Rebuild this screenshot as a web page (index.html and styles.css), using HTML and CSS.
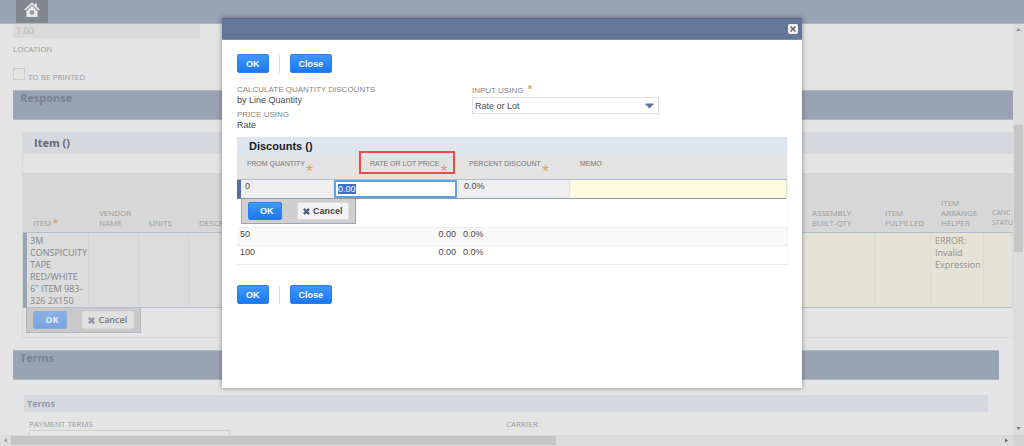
FILE: index.html
```html
<!DOCTYPE html>
<html lang="en">
<head>
<meta charset="utf-8">
<title>Quantity Discounts</title>
<link rel="stylesheet" href="styles.css">
</head>
<body>
<div class="app">
  <header class="topbar">
    <a class="home" href="#" aria-label="Home">
      <svg viewBox="0 0 16 16" width="16" height="16" aria-hidden="true">
        <path d="M0.800 8.200 8 1.400l7.200 6.800" fill="none" stroke="#e6e6e6" stroke-width="1.700"/>
        <path d="M11 1.600h2v4l-2-2z" fill="#e6e6e6"/>
        <path fill-rule="evenodd" d="M8 3.800 13.600 9.200V15H2.400V9.200zM6.200 8.600v3.600h3.600V8.600z" fill="#e6e6e6"/>
        <path d="M7.300 9.700h1.400v1.400H7.300z" fill="#c4c6ca"/>
      </svg>
    </a>
  </header>

  <main class="page">
    <input class="rate-field" type="text" value="1.00" aria-label="Exchange rate" disabled>
    <p class="label location">LOCATION</p>
    <label class="check label"><input type="checkbox"><span>TO BE PRINTED</span></label>

    <h2 class="section">Response</h2>
    <section class="panel">
      <h3 class="panel-title">Item ()</h3>
      <table class="items">
        <colgroup>
          <col class="c-item"><col class="c-vendor"><col class="c-units"><col><col class="c-built"><col class="c-full"><col class="c-help"><col class="c-canc">
        </colgroup>
        <thead>
          <tr>
            <th>ITEM<span class="star">*</span></th>
            <th>VENDOR NAME</th>
            <th>UNITS</th>
            <th>DESCRIPTION</th>
            <th>ASSEMBLY BUILT-QTY</th>
            <th>ITEM FULFILLED</th>
            <th>ITEM ARRANGE HELPER</th>
            <th>CANC<br>STATU</th>
          </tr>
        </thead>
        <tbody>
          <tr>
            <td class="current">3M CONSPICUITY TAPE RED/WHITE 6" ITEM 983-<wbr>326 2X150</td>
            <td></td><td></td><td></td>
            <td class="edit"></td><td class="edit"></td>
            <td class="edit">ERROR: Invalid Expression</td>
            <td class="edit"></td>
          </tr>
        </tbody>
      </table>
      <div class="row-actions">
        <button class="btn primary" type="button">OK</button>
        <button class="btn plain" type="button">
          <svg viewBox="0 0 8 8" width="7" height="7" aria-hidden="true"><path d="M1 1l6 6M7 1L1 7" stroke="currentColor" stroke-width="2.800"/></svg>Cancel</button>
      </div>
    </section>

    <h2 class="section terms">Terms</h2>
    <h4 class="subbar">Terms</h4>
    <div class="term-fields">
      <label class="label">PAYMENT TERMS<input class="term-input" type="text"></label>
      <span class="label">CARRIER</span>
    </div>
  </main>

  <div class="vscroll" aria-hidden="true">
    <svg viewBox="0 0 6 4" width="5" height="3"><path d="M0 4 3 0l3 4z" fill="#8b8b8b"/></svg>
    <div class="vthumb"></div>
    <svg viewBox="0 0 6 4" width="5" height="3"><path d="M0 0h6L3 4z" fill="#7d7d7d"/></svg>
  </div>
  <div class="hscroll" aria-hidden="true">
    <svg viewBox="0 0 4 6" width="3" height="5"><path d="M4 0v6L0 3z" fill="#a0a0a0"/></svg>
    <div class="hthumb"></div>
    <svg viewBox="0 0 4 6" width="3" height="5"><path d="M0 0v6l4-3z" fill="#6d6d6d"/></svg>
  </div>
  <div class="corner"></div>
</div>

<div class="dialog" role="dialog" aria-label="Quantity discounts">
  <div class="dialog-head">
    <button class="close" type="button" aria-label="Close window">
      <svg viewBox="0 0 8 8" width="8" height="8" aria-hidden="true"><path d="M1.500 1.500l5 5M6.500 1.500l-5 5" stroke="#6a6a6a" stroke-width="1.600"/></svg>
    </button>
  </div>
  <form class="dialog-body">
    <div class="buttons">
      <button class="btn primary" type="button">OK</button>
      <span class="divider"></span>
      <button class="btn primary" type="button">Close</button>
    </div>
    <div class="fields">
      <dl class="facts">
        <dt>CALCULATE QUANTITY DISCOUNTS</dt><dd>by Line Quantity</dd>
        <dt>PRICE USING</dt><dd>Rate</dd>
      </dl>
      <div class="using">
        <label for="using">INPUT USING <span class="star">*</span></label>
        <div class="select">
          <select id="using"><option>Rate or Lot</option></select>
          <svg viewBox="0 0 9 6" width="9" height="6" aria-hidden="true"><path d="M0.500 0.500h8v1L4.500 5.500.5 1.500z" fill="#5d78a3"/></svg>
        </div>
      </div>
    </div>
    <section class="discounts">
      <h3>Discounts ()</h3>
      <table class="grid">
        <colgroup><col class="g-from"><col class="g-rate"><col class="g-pct"><col></colgroup>
        <thead>
          <tr>
            <th><span class="req">FROM QUANTITY</span></th>
            <th class="marked"><span class="req">RATE OR LOT PRICE</span></th>
            <th><span class="req">PERCENT DISCOUNT</span></th>
            <th>MEMO</th>
          </tr>
        </thead>
        <tbody>
          <tr class="editing">
            <td class="current">0</td>
            <td class="cell-input"><input id="price" type="text" value="0.00" aria-label="Rate or lot price"></td>
            <td>0.0%</td>
            <td class="memo"></td>
          </tr>
          <tr class="tools">
            <td colspan="4">
              <div class="row-actions">
                <button class="btn primary" type="button">OK</button>
                <button class="btn plain" type="button">
                  <svg viewBox="0 0 8 8" width="7" height="7" aria-hidden="true"><path d="M1 1l6 6M7 1L1 7" stroke="currentColor" stroke-width="2.800"/></svg>Cancel</button>
              </div>
            </td>
          </tr>
          <tr class="line odd"><td>50</td><td class="num">0.00</td><td>0.0%</td><td></td></tr>
          <tr class="line"><td>100</td><td class="num">0.00</td><td>0.0%</td><td></td></tr>
        </tbody>
      </table>
    </section>
    <div class="buttons">
      <button class="btn primary" type="button">OK</button>
      <span class="divider"></span>
      <button class="btn primary" type="button">Close</button>
    </div>
  </form>
</div>
<script src="main.js"></script>
</body>
</html>
```

FILE: styles.css
```css
* { box-sizing: border-box; }
body { margin: 0; background: #e4e4e4; color: #858585; font: 9px/12px "Open Sans", sans-serif; }
h2, h3, h4, p, dl, dd { margin: 0; }
button, input, select { font: inherit; color: inherit; }
table { border-collapse: separate; border-spacing: 0; table-layout: fixed; width: 100%; }

.app { display: grid; grid-template: 24px minmax(0, 1fr) 11px / minmax(0, 1fr) 11px; height: 100vh; min-height: 446px; }
.topbar { grid-column: 1 / -1; display: flex; padding-left: 16px; background: #98a3b3; border-bottom: 1px solid #b0b8c4; }
.home { display: flex; align-items: center; justify-content: center; width: 32px; padding-bottom: 3px; background: #82868f; }

.page { overflow: hidden; padding-left: 13px; }
.label { color: #9c9c9c; font-size: 8px; line-height: 12px; }
.rate-field { display: block; width: 187px; height: 14px; padding: 0 3px 2px; border: 0; background: #dadada; color: #b4b4b4; }
.location { margin-top: 5px; }
.check { display: flex; align-items: flex-end; gap: 3px; height: 26px; }
.check span { line-height: 8px; }
.check input { appearance: none; width: 12px; height: 12px; margin: 0 0 1px; border: 1px solid #cdcdcd; }
.section { height: 30px; margin-top: 9px; padding: 0 7px; background: #98a3b3; border: 1px solid #b0b8c4; border-left: 0; border-right: 0; color: #788395; font-size: 11px; line-height: 13px; }
.panel { margin: 12px 0 0 9px; padding-bottom: 4px; border: 1px solid #d9d9d9; border-top: 0; border-right: 0; }
.panel-title { height: 22px; padding-left: 11px; background: #d5d8dd; color: #66696e; font-size: 11px; line-height: 22px; }
.items { margin-top: 19px; }
.c-item { width: 66px; }
.c-vendor, .c-units { width: 50px; }
.c-built { width: 73px; }
.c-full { width: 56px; }
.c-help { width: 53px; }
.c-canc { width: 29px; }
.items th { height: 60px; padding: 0 0 4px 10px; background: #d7d7d7; border-bottom: 1px solid #b4bdca; color: #9c9c9c; font-size: 8px; font-weight: 400; line-height: 10px; text-align: left; vertical-align: bottom; }
.items th:last-child { padding-left: 8px; font-size: 7px; }
.items td { height: 75px; padding: 2px 0 0 4px; background: #dcdcdc; border-right: 1px solid #d3d3d3; border-bottom: 1px solid #b4bdca; vertical-align: top; }
.items .current { padding-left: 3px; border-left: 4px solid #98a3b3; }
.items .edit { background: #e4e3d6; border-right-color: #d9dace; }
.items .edit:nth-child(n+7) { color: #95908b; }
.star { margin-left: 2px; color: #cda45f; font-weight: 700; }
.terms { margin: 12px 14px 0 0; }
.subbar { margin: 15px 25px 0 11px; padding-left: 3px; background: #d5d8dd; color: #8f9db2; font-size: 9px; line-height: 17px; }
.term-fields { display: grid; grid-template-columns: 477px 1fr; padding: 6px 0 0 16px; }
.term-input { display: block; width: 201px; height: 18px; border: 1px solid #cfcfcf; background: #e6e6e6; }

.btn { display: flex; align-items: center; justify-content: center; height: 19px; border-radius: 2px; padding: 0 8px; font-weight: 700; }
.primary { border: 1px solid #2b7fe8; background: linear-gradient(#3f97fd, #1b78f0); color: #fff; }
.plain { gap: 3px; border: 1px solid #dcdcdc; background: #f3f3f3; color: #444; }
.plain svg { color: #53627c; }
.row-actions { display: flex; gap: 15px; width: 115px; height: 25px; margin-left: 4px; padding: 3px 6px; background: #cfcfcf; border: 1px solid #9ba5b5; border-top: 0; }
.row-actions .btn { height: 18px; padding: 0 1px; }
.row-actions .primary { width: 34px; padding-left: 5px; }
.row-actions .plain { width: 53px; }
.panel .row-actions { margin-left: 3px; background: #c9c9c9; border-color: #b0b6c0; }
.panel .primary { border-color: #86aede; background: linear-gradient(#8ab2e6, #77a3e0); color: #e6e9ee; }
.panel .plain { border-color: #d8d8d8; background: #e0e0e0; color: #7c7c7c; font-weight: 600; }
.panel .plain svg { color: #8e97a5; }

.vscroll { display: flex; flex-direction: column; justify-content: space-between; align-items: center; padding: 4px 0 5px; background: #dcdcdc; }
.vthumb { width: 9px; height: 127px; margin-bottom: 82px; background: #c6c6c6; }
.hscroll { display: flex; align-items: center; padding: 0 5px 0 4px; background: #dcdcdc; }
.hthumb { flex: 0 0 545px; height: 9px; margin: 0 auto 0 4px; background: #c6c6c6; }
.corner { background: #d2d2d0; }

.dialog { position: absolute; top: 18px; left: 50%; margin-left: -290px; width: 580px; min-height: 370px; background: #fff; box-shadow: 0 0 5px rgba(0, 0, 0, .4); color: #4a4a4a; font-family: "Liberation Sans", Arial, sans-serif; }
.dialog-head { display: flex; align-items: center; justify-content: flex-end; height: 22px; padding-right: 4px; background: #627799; border-top: 1px solid #56698a; border-bottom: 1px solid #8090ab; }
.close { display: flex; align-items: center; justify-content: center; width: 10px; height: 10px; padding: 0; border: 0; border-radius: 2px; background: #f2f2f2; }
.dialog-body { padding: 14px 14px 0 15px; }
.buttons { display: flex; align-items: center; gap: 10px; }
.divider { width: 1px; height: 18px; background: #dcdcdc; }
.fields { display: grid; grid-template-columns: 235px 187px; padding-top: 12px; }
.facts dt, .using label { color: #858585; font-size: 8px; line-height: 10px; }
.facts dd { margin-bottom: 5px; line-height: 10px; }
.facts dd:last-child { margin-bottom: 3px; }
.using label { display: block; line-height: 12px; }
.using .star { font-size: 11px; line-height: 8px; }
.select { display: flex; align-items: center; height: 17px; padding-right: 4px; border: 1px solid #dfdfdf; }
.select select { flex: 1; appearance: none; border: 0; padding: 0 2px; background: none; }
.discounts { margin: 4px 0 20px; border-right: 1px solid #f2f2f2; }
.discounts h3 { padding-left: 12px; background: #dfe5ef; color: #1b1b1b; font-size: 11px; line-height: 19px; }
.g-from { width: 97px; }
.g-rate { width: 125px; }
.g-pct { width: 111px; }
.grid th { height: 24px; padding: 2px 0 0 10px; background: #e3e3e3; border-bottom: 1px solid #b4bfce; color: #757575; font-size: 7px; font-weight: 400; text-align: left; vertical-align: top; }
.req { position: relative; }
.req::after { content: "*"; position: absolute; top: 3px; right: -8px; color: #d3a55c; font-size: 17px; line-height: 17px; }
.grid .marked { position: relative; padding-left: 36px; }
.marked::before { content: ""; position: absolute; top: -5px; left: 25px; right: 4px; height: 19px; border: 2px solid #f04848; }
.grid td { padding: 0 3px; vertical-align: top; }
.grid .editing td { height: 19px; padding: 0 5px; background: #efefef; border-bottom: 1px solid #8c9ab0; border-right: 1px solid #e8e4d8; }
.grid .editing .current { padding-left: 4px; border-left: 4px solid #52709f; }
.grid .editing .cell-input { padding: 0 1px 0 0; }
.cell-input input { display: block; width: 100%; height: 18px; padding: 0 2px; border: 2px solid #60a1de; border-radius: 1px; outline: 0; background: #fff; }
.cell-input input::selection { background: #3a6fd2; color: #fff; }
.grid .editing .memo { background: #fdfcdf; }
.grid .tools td { height: 28px; padding: 0; }
.line td { height: 19px; border-bottom: 1px solid #ededed; }
.grid .line td:nth-child(3) { padding-left: 4px; }
.odd td { background: #f9f9f9; border-top: 1px solid #ededed; }
.num { text-align: right; }
```

FILE: main.js
```js
const price = document.getElementById("price");
price.focus();
price.select();
```
